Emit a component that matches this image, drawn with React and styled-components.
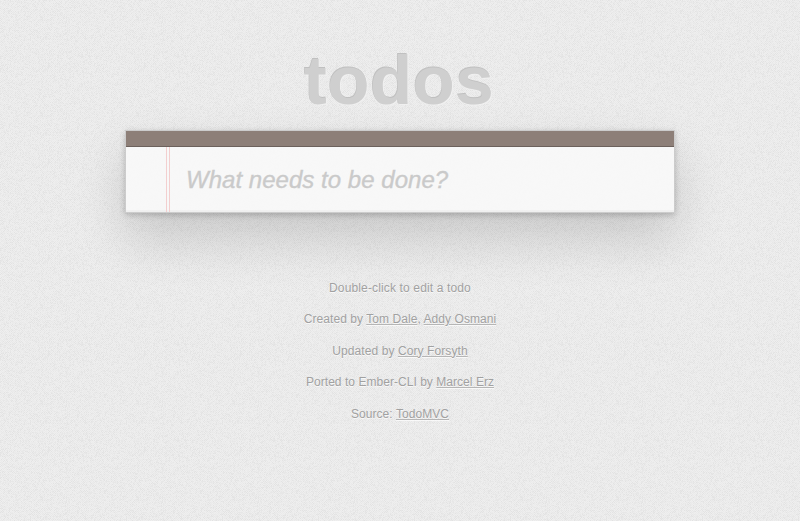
import React from 'react';
import styled, { createGlobalStyle } from 'styled-components';

const TILE = 96;

// Builds a repeating woven-paper tile out of single-pixel threads.
function weaveTile() {
  let seed = 41;
  const random = () => {
    seed = (seed * 16807) % 2147483647;
    return seed / 2147483647;
  };
  const dark = ['', '', ''];
  let light = '';
  for (let y = 0; y < TILE; y += 1) {
    for (let x = 0; x < TILE; x += 1) {
      const cell = `M${x} ${y}h1v1h-1z`;
      const r = random();
      if ((x + y) % 2 === 0) {
        if (r < 0.9) dark[r < 0.28 ? 0 : r < 0.66 ? 1 : 2] += cell;
      } else if (r < 0.55) {
        light += cell;
      } else if (r > 0.88) {
        dark[1] += cell;
      }
    }
  }
  const svg = `<svg xmlns="http://www.w3.org/2000/svg" width="${TILE}" height="${TILE}" shape-rendering="crispEdges"><path fill="#efefef" d="${light}"/><path fill="#eaeaea" d="${dark[0]}"/><path fill="#e7e7e7" d="${dark[1]}"/><path fill="#e2e2e2" d="${dark[2]}"/></svg>`;
  return `url("data:image/svg+xml,${encodeURIComponent(svg)}")`;
}

const weave = weaveTile();

const GlobalStyle = createGlobalStyle`
  html { background: #ececec ${weave}; min-height: 100%; }
  body {
    margin: 0;
    font: 14px/1.4 "Liberation Sans", Arial, sans-serif;
    color: #4d4d4d;
    overflow: hidden;
  }
  * { box-sizing: border-box; }
`;

const Page = styled.div`
  width: 550px;
  margin: 0 auto;
  padding-top: 36px;
`;

const Title = styled.h1`
  margin: 0;
  height: 94px;
  padding-right: 2px;
  font-size: 69px;
  font-weight: bold;
  letter-spacing: 0.5px;
  line-height: 90px;
  text-align: center;
  color: #cfcfcf;
  text-shadow: -0.6px -0.6px 0 #c0c0c0, 1px 1px 0 #f0f0f0;
`;

const TodoCard = styled.section`
  border: 1px solid #ccc;
  background: rgba(255, 255, 255, 0.68);
  background-clip: padding-box;
  box-shadow: 0 2px 6px 0 rgba(0, 0, 0, 0.2), 0 25px 50px 0 rgba(0, 0, 0, 0.15);
`;

const Bar = styled.div`
  height: 16px;
  background: #8d7f78;
  border-bottom: 1px solid #6c615c;
`;

const Entry = styled.div`
  display: flex;
  height: 65px;
  background: rgba(247, 247, 247, 0.65);
  box-shadow: inset 0 -2px 1px 0 rgba(0, 0, 0, 0.03);
`;

const MarginRule = styled.div`
  width: 4px;
  margin-left: 40px;
  border: 1px solid #f3cfcf;
  border-width: 0 1px;
`;

const NewTodo = styled.input`
  flex: 1;
  min-width: 0;
  padding: 0 16px;
  border: 0;
  outline: 0;
  background: transparent;
  font: 24px "Liberation Sans", Arial, sans-serif;
  &::placeholder {
    color: #cacaca;
    font-style: italic;
    letter-spacing: 0.03px;
    -webkit-text-stroke: 0.35px #cacaca;
    opacity: 1;
  }
`;

const Info = styled.footer`
  margin-top: 65.7px;
  color: #a1a1a1;
  font-size: 12px;
  line-height: 19.6px;
  text-align: center;
  text-shadow: 0 1px 0 rgba(255, 255, 255, 0.7);
`;

const Line = styled.p`
  margin: 0 0 12px;
  letter-spacing: ${({ $tracking = 0.06 }) => $tracking}px;
`;

const Link = styled.a`
  color: inherit;
  text-decoration: underline;
  text-decoration-color: #b5b5b5;
`;

export default function App() {
  return (
    <>
      <GlobalStyle />
      <Page>
        <Title>todos</Title>
        <TodoCard>
          <Bar />
          <Entry>
            <MarginRule />
            <NewTodo placeholder="What needs to be done?" />
          </Entry>
        </TodoCard>
        <Info>
          <Line $tracking={0.14}>Double-click to edit a todo</Line>
          <Line>
            Created by <Link href="#tom">Tom Dale</Link>, <Link href="#addy">Addy Osmani</Link>
          </Line>
          <Line $tracking={0.09}>
            Updated by <Link href="#cory">Cory Forsyth</Link>
          </Line>
          <Line $tracking={0.04}>
            Ported to Ember-CLI by <Link href="#marcel">Marcel Erz</Link>
          </Line>
          <Line>
            Source: <Link href="#todomvc">TodoMVC</Link>
          </Line>
        </Info>
      </Page>
    </>
  );
}
